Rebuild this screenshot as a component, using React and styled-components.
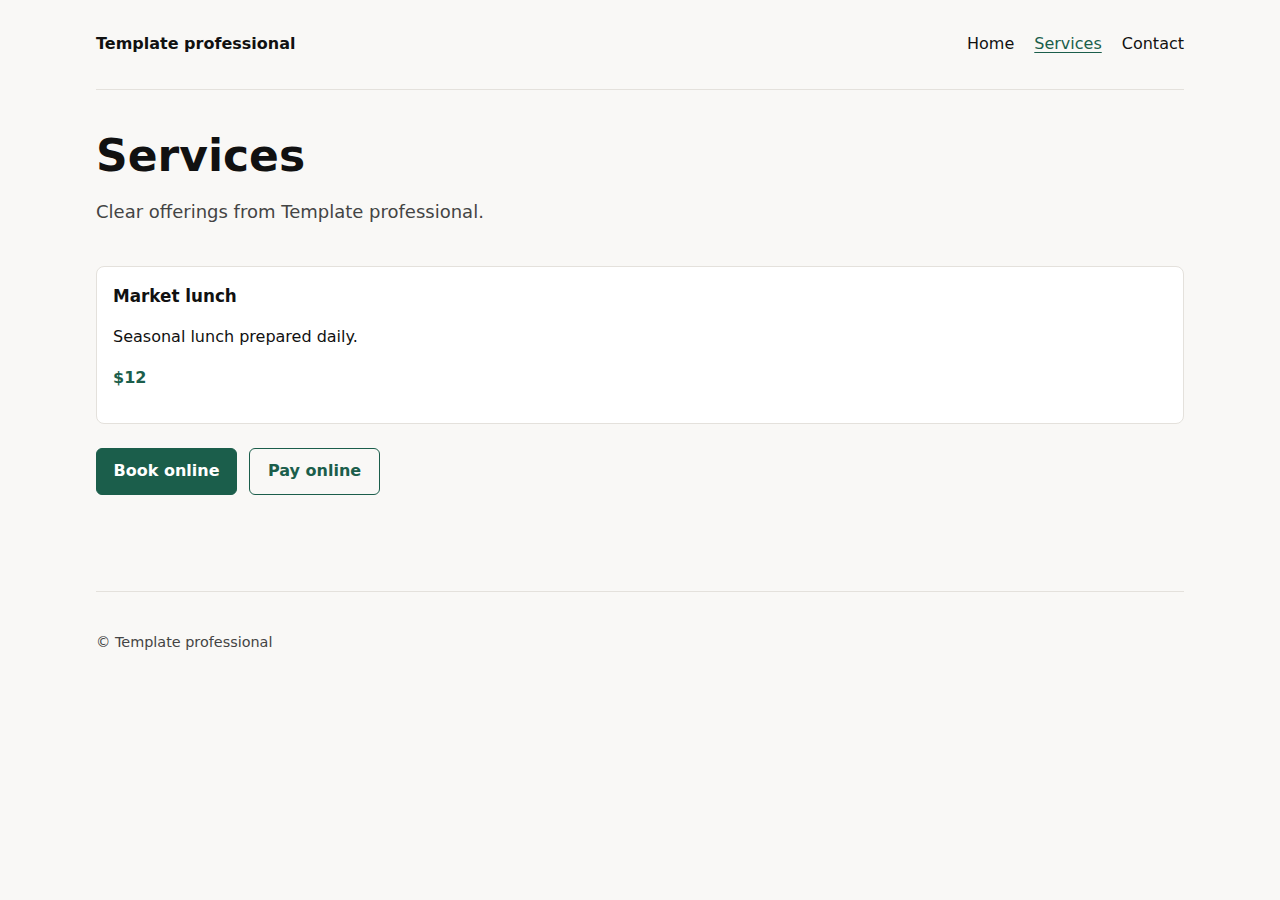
import React from 'react';
import styled, { createGlobalStyle } from 'styled-components';

const GlobalStyle = createGlobalStyle`
  * { box-sizing: border-box; }
  body {
    margin: 0;
    background: #f9f8f6;
    color: #111;
    font-family: "DejaVu Sans", Verdana, sans-serif;
  }
`;

const Page = styled.div`
  max-width: 1088px;
  margin: 0 auto;
`;

const Header = styled.header`
  height: 90px;
  display: flex;
  align-items: center;
  justify-content: space-between;
  border-bottom: 1px solid #e4e1dc;
  padding-bottom: 2px;
`;

const Brand = styled.div`
  font-size: 16px;
  font-weight: 700;
  color: #111;
`;

const Nav = styled.nav`
  display: flex;
  gap: 20px;
`;

const NavLink = styled.a`
  font-size: 16px;
  line-height: 24px;
  color: ${(p) => (p.$active ? '#1b5e4b' : '#111')};
  text-decoration: ${(p) => (p.$active ? 'underline' : 'none')};
  text-underline-offset: 3px;
`;

const Main = styled.main`
  padding: 40px 0 96px;
`;

const Title = styled.h1`
  margin: 0 0 15px;
  font-size: 44px;
  line-height: 1.2;
  font-weight: 700;
  color: #111;
`;

const Lead = styled.p`
  margin: 0 0 41px;
  font-size: 18px;
  line-height: 1.5;
  color: #444;
`;

const Card = styled.section`
  background: #fff;
  border: 1px solid #e4e1dc;
  border-radius: 8px;
  padding: 17px 16px 0;
`;

const CardTitle = styled.h3`
  margin: 0 0 16px;
  font-size: 16.8px;
  line-height: 1.5;
  font-weight: 700;
`;

const CardText = styled.p`
  margin: 0 0 ${(p) => (p.$price ? '16px' : '17px')};
  font-size: 16px;
  line-height: 1.5;
  color: ${(p) => (p.$price ? '#1b5e4b' : '#111')};
  font-weight: ${(p) => (p.$price ? 700 : 400)};
  padding-bottom: ${(p) => (p.$price ? '17px' : '0')};
`;

const Actions = styled.div`
  display: flex;
  gap: 12px;
  margin-top: 24px;
`;

const Button = styled.a`
  display: inline-block;
  padding: 11px ${(p) => (p.$primary ? '16.5px' : '18px')} 12px;
  font-size: 16px;
  line-height: 22px;
  font-weight: 700;
  border-radius: 6px;
  border: 1px solid #1b5e4b;
  text-decoration: none;
  background: ${(p) => (p.$primary ? '#1b5e4b' : 'transparent')};
  color: ${(p) => (p.$primary ? '#fff' : '#1b5e4b')};
`;

const Footer = styled.footer`
  border-top: 1px solid #e4e1dc;
  padding-top: 40px;
  font-size: 14.4px;
  line-height: 1.5;
  color: #444;
`;

export default function App() {
  return (
    <>
      <GlobalStyle />
      <Page>
        <Header>
          <Brand>Template professional</Brand>
          <Nav>
            <NavLink href="#">Home</NavLink>
            <NavLink href="#" $active>Services</NavLink>
            <NavLink href="#">Contact</NavLink>
          </Nav>
        </Header>
        <Main>
          <Title>Services</Title>
          <Lead>Clear offerings from Template professional.</Lead>
          <Card>
            <CardTitle>Market lunch</CardTitle>
            <CardText>Seasonal lunch prepared daily.</CardText>
            <CardText $price>$12</CardText>
          </Card>
          <Actions>
            <Button href="#" $primary>Book online</Button>
            <Button href="#">Pay online</Button>
          </Actions>
        </Main>
        <Footer>© Template professional</Footer>
      </Page>
    </>
  );
}
